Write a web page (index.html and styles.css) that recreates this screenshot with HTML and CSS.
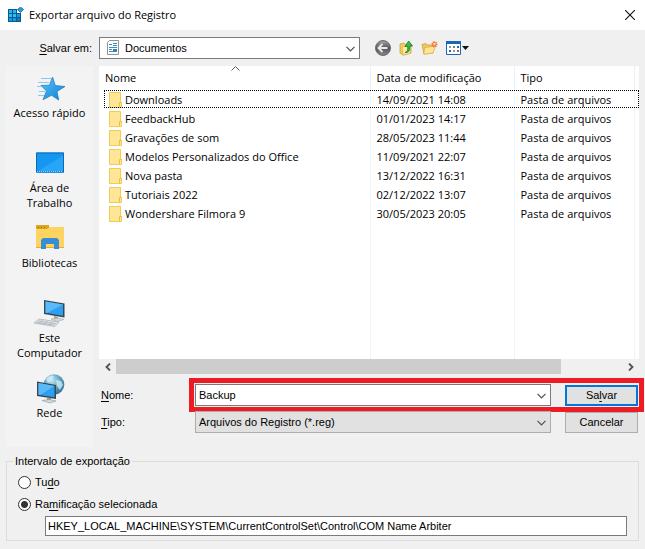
FILE: index.html
```html
<!DOCTYPE html>
<html lang="pt-BR">
<head>
  <meta charset="UTF-8" />
  <meta name="viewport" content="width=device-width, initial-scale=1.0"/>
  <title>Exportar arquivo do Registro</title>
  <link rel="stylesheet" href="styles.css">
</head>
<body>
  <svg class="simbolos" width="0" height="0" aria-hidden="true">
    <symbol id="seta" viewBox="0 0 9 6">
      <path d="M.5 .8 4.5 4.8 8.5 .8" fill="none" stroke="#505050" stroke-width="1.2"/>
    </symbol>
    <symbol id="pasta" viewBox="0 0 13 16">
      <path d="M.5 .5h11v10h1v5H.5z" fill="#ffe596" stroke="#f0cb55"/>
      <path d="M10.500 15v-4.500h2" fill="none" stroke="#e9bf3c"/>
    </symbol>
  </svg>

  <header class="titulo">
    <svg width="16" height="16" viewBox="0 0 16 16">
      <path d="M0 2h9v4h4v9H0z" fill="#075a94"/>
      <path d="M1 3h3v3H1zM5 3h3v3H5z" fill="#28b4ec"/>
      <path d="M1 7h3v3H1zM5 7h3v3H5z" fill="#35c0f2"/>
      <path d="M9 7h3v3H9zM1 11h3v3H1zM5 11h3v3H5z" fill="#1c98d8"/>
      <path d="M9 11h3v3H9z" fill="#0f7cc0"/>
      <path d="M12.500 0l3 2.500-3 3-3-3z" fill="#2b9fdc" stroke="#0a5f9c" stroke-width=".8"/>
    </svg>
    <h1>Exportar arquivo do Registro</h1>
    <button class="fechar" aria-label="Fechar">
      <svg width="10" height="10" viewBox="0 0 10 10"><path d="M0 0l10 10M10 0L0 10" stroke="#111" stroke-width="1.1"/></svg>
    </button>
  </header>

  <div class="barra">
    <label for="salvar-em"><u>S</u>alvar em:</label>
    <div class="combo combo-local">
      <svg class="combo-icone" width="12" height="15" viewBox="0 0 12 15">
        <path d="M.5 2.500 2.500.5h9v14H.5z" fill="#fdfdfd" stroke="#8c9499"/>
        <path d="M2 4.500h3M6 3.500h4M6 5.500h4M2 7.500h8M2 9.500h3M2 11.500h8" stroke="#3d8cc4"/>
        <path d="M6 9h4v2H6z" fill="#2f7db5"/>
      </svg>
      <select id="salvar-em"><option>Documentos</option></select>
      <svg class="combo-seta" width="9" height="6"><use href="#seta"/></svg>
    </div>
    <div class="ferramentas">
      <button aria-label="Voltar">
        <svg width="16" height="16" viewBox="0 0 16 16">
          <defs><linearGradient id="cinza" x2="0" y2="1"><stop stop-color="#a8a8a8"/><stop offset=".5" stop-color="#555"/><stop offset="1" stop-color="#8a8a8a"/></linearGradient></defs>
          <circle cx="8" cy="8" r="7.500" fill="url(#cinza)" stroke="#6b6b6b"/>
          <path d="M7.500 4L3.500 8l4 4M4 8h8.500" fill="none" stroke="#e8e8e8" stroke-width="2"/>
        </svg>
      </button>
      <button aria-label="Um nível acima">
        <svg width="14" height="16" viewBox="0 0 14 16">
          <path d="M1 4l4-1 1 1.500 6-.5v9l-8 2-3-2z" fill="#f2cf63" stroke="#cf9f30" stroke-width=".8"/>
          <path d="M3 7l9-2-1 8.500-7 1.500z" fill="#ffe9a0" stroke="#d9ae45" stroke-width=".7"/>
          <path d="M6 12.500c2.500-.5 3-2.500 2.800-6H6L9.700 1l3.800 5h-2.700c.3 4-1 7-4.800 6.500z" fill="#3bb84a" stroke="#137a24" stroke-width=".8"/>
        </svg>
      </button>
      <button aria-label="Criar nova pasta">
        <svg width="17" height="16" viewBox="0 0 17 16">
          <path d="M1 4.500l4-1 1.500 1.500H12v8l-9 1z" fill="#efc85a" stroke="#cf9f30" stroke-width=".8"/>
          <path d="M4 7.500l10.500-1.500L12 13l-9.500 1.200z" fill="#ffe596" stroke="#d9ae45" stroke-width=".7"/>
          <path d="M13.500 .5l.8 2 2-.8-.8 2 1.500 1-1.800.6.5 2-1.800-1-1.200 1.600-.5-2-2 .3 1.200-1.700-1.400-1.200 2-.2-.3-2 1.500 1z" fill="#f0703c"/>
          <circle cx="13.400" cy="4" r="1.300" fill="#ffd9b0"/>
        </svg>
      </button>
      <button class="exibir" aria-label="Menu Exibir">
        <svg width="24" height="14" viewBox="0 0 24 14">
          <path d="M.5 .5h14v13H.5z" fill="#fff" stroke="#1a66b8"/>
          <path d="M0 0h15v3H0z" fill="#1a66b8"/>
          <path d="M3 5h2v2H3zM7 9h2v2H7z" fill="#8c9cae"/>
          <path d="M7 5h2v2H7z" fill="#4f9e50"/>
          <path d="M11 5h2v2h-2zM3 9h2v2H3z" fill="#205fc0"/>
          <path d="M11 9h2v2h-2z" fill="#c8502c"/>
          <path d="M16 5h7l-3.500 4z" fill="#111"/>
        </svg>
      </button>
    </div>
  </div>

  <main class="corpo">
    <nav class="locais">
      <button>
        <svg width="32" height="32" viewBox="0 0 32 32">
          <defs><linearGradient id="azul" x2="1" y2="1"><stop stop-color="#5cc4f7"/><stop offset="1" stop-color="#0a80dd"/></linearGradient></defs>
          <path d="M18.500 5l2.800 8.500 9.700 1-8 5 1.700 8.500-7.200-4.700-8.500 4.400 3.500-8.700-5.500-5.500 8.500-.3z" fill="url(#azul)" stroke="#2b7fc0" stroke-width=".8"/>
          <path d="M7 6.500h10M4 10.500h11M3 14.500h5M5 19.500h6M4 23.500h6" stroke="#8cc8ec"/>
        </svg>
        Acesso rápido
      </button>
      <button>
        <svg width="32" height="32" viewBox="0 0 32 32">
          <path d="M2 5.500h28v20H2z" fill="#1597f0"/>
          <path d="M2 25.500L30 8v17.500z" fill="#27a5f7"/>
          <path d="M2.500 6h27v19h-27z" fill="none" stroke="#0b69b5"/>
          <path d="M3 24.500h26" stroke="#8fd0fa" stroke-dasharray="1 1"/>
        </svg>
        Área de Trabalho
      </button>
      <button>
        <svg width="32" height="32" viewBox="0 0 32 32">
          <path d="M2 3h12l1 2h15v21H2z" fill="#ffd35f"/>
          <path d="M2 3h13v3l-2 1H2z" fill="#dca51f"/>
          <path d="M4 5.500h8" stroke="#8a6514" stroke-dasharray="1 2"/>
          <path d="M2 25.500h28" stroke="#e3ad35"/>
          <path d="M7 27V18l2-2h14l2 2v9h-5v-5h-8v5z" fill="#368ed4"/>
        </svg>
        Bibliotecas
      </button>
      <button>
        <svg width="32" height="32" viewBox="0 0 32 32">
          <path d="M10 3l20.500 3.500v14L10 17z" fill="#36474f"/>
          <path d="M11.500 4.500L29 7.500v11.300l-17.500-3z" fill="#2d9ff0"/>
          <path d="M11.500 4.500L29 7.500 13 16l-1.500-.2z" fill="#5cb9f8"/>
          <path d="M20 19l4 .7v3h-4z" fill="#9ba4a8"/>
          <path d="M17 22l8-1 5 1.500-7 2z" fill="#d5dadd" stroke="#9aa1a5" stroke-width=".5"/>
          <path d="M5 22l20 3-4 4.500L0 26z" fill="#e2e5e7" stroke="#9aa1a5" stroke-width=".6"/>
          <path d="M4 24l18 2.800M2.500 25.500l18 2.600M9 22.800l-4 3.800M14 23.500l-4 4M19 24.300l-4 4" stroke="#a3abb0" stroke-width=".7"/>
        </svg>
        Este Computador
      </button>
      <button>
        <svg width="32" height="32" viewBox="0 0 32 32">
          <defs><radialGradient id="globo" cx=".4" cy=".3" r=".75"><stop stop-color="#c6e6f3"/><stop offset=".5" stop-color="#62a6c6"/><stop offset="1" stop-color="#2d6a8c"/></radialGradient></defs>
          <circle cx="20" cy="12.500" r="10.300" fill="url(#globo)"/>
          <path d="M12 7c3-4 6-4 8-3l-2 4-4 3zM22 8l5 1 2 4-3 5-3-4z" fill="#d9eef5" opacity=".75"/>
          <path d="M3 9.500l19 3.500v14L3 24z" fill="#36474f"/>
          <path d="M4.500 11l16 3v11.300l-16-2.600z" fill="#2d9ff0"/>
          <path d="M4.500 11l16 3L6 23l-1.500-.3z" fill="#5cb9f8"/>
          <path d="M13 25.500l4 .6v3h-4z" fill="#8f989d"/>
          <path d="M8 28.500l7-1 7 1.500-6 2z" fill="#d5dadd" stroke="#8f989d" stroke-width=".6"/>
        </svg>
        Rede
      </button>
    </nav>

    <section class="arquivos">
      <svg class="ordem" width="9" height="5" viewBox="0 0 9 5"><path d="M.5 4.500l4-4 4 4" fill="none" stroke="#606060"/></svg>
      <table>
        <colgroup><col><col class="col-data"><col class="col-tipo"><col class="col-resto"></colgroup>
        <thead>
          <tr><th>Nome</th><th>Data de modificação</th><th>Tipo</th><th></th></tr>
        </thead>
        <tbody>
          <tr class="foco"><td><svg width="13" height="16"><use href="#pasta"/></svg>Downloads</td><td>14/09/2021 14:08</td><td>Pasta de arquivos</td><td></td></tr>
          <tr><td><svg width="13" height="16"><use href="#pasta"/></svg>FeedbackHub</td><td>01/01/2023 14:17</td><td>Pasta de arquivos</td><td></td></tr>
          <tr><td><svg width="13" height="16"><use href="#pasta"/></svg>Gravações de som</td><td>28/05/2023 11:44</td><td>Pasta de arquivos</td><td></td></tr>
          <tr><td><svg width="13" height="16"><use href="#pasta"/></svg>Modelos Personalizados do Office</td><td>11/09/2021 22:07</td><td>Pasta de arquivos</td><td></td></tr>
          <tr><td><svg width="13" height="16"><use href="#pasta"/></svg>Nova pasta</td><td>13/12/2022 16:31</td><td>Pasta de arquivos</td><td></td></tr>
          <tr><td><svg width="13" height="16"><use href="#pasta"/></svg>Tutoriais 2022</td><td>02/12/2022 13:07</td><td>Pasta de arquivos</td><td></td></tr>
          <tr><td><svg width="13" height="16"><use href="#pasta"/></svg>Wondershare Filmora 9</td><td>30/05/2023 20:05</td><td>Pasta de arquivos</td><td></td></tr>
          <tr class="vazio"><td></td><td></td><td></td><td></td></tr>
        </tbody>
      </table>
      <div class="rolagem">
        <button aria-label="Rolar para a esquerda"><svg width="6" height="8" viewBox="0 0 6 8"><path d="M5 .5L1.500 4 5 7.500" fill="none" stroke="#505050" stroke-width="1.800"/></svg></button>
        <div class="trilho"><div class="polegar"></div></div>
        <button aria-label="Rolar para a direita"><svg width="6" height="8" viewBox="0 0 6 8"><path d="M1 .5L4.500 4 1 7.500" fill="none" stroke="#505050" stroke-width="1.800"/></svg></button>
      </div>

      <div class="linha">
        <label for="nome"><u>N</u>ome:</label>
        <div class="linha-campos destaque">
          <div class="combo">
            <input type="text" id="nome" value="Backup">
            <svg class="combo-seta" width="9" height="6"><use href="#seta"/></svg>
          </div>
          <button class="botao padrao">Sa<u>l</u>var</button>
        </div>
      </div>
      <div class="linha">
        <label for="tipo"><u>T</u>ipo:</label>
        <div class="linha-campos">
          <div class="combo combo-tipo">
            <select id="tipo"><option>Arquivos do Registro (*.reg)</option></select>
            <svg class="combo-seta" width="9" height="6"><use href="#seta"/></svg>
          </div>
          <button class="botao">Cancelar</button>
        </div>
      </div>
    </section>
  </main>

  <fieldset class="intervalo">
    <legend>Intervalo de exportação</legend>
    <label class="opcao"><input type="radio" name="intervalo"><span>Tu<u>d</u>o</span></label>
    <label class="opcao"><input type="radio" name="intervalo" checked><span>Ra<u>m</u>ificação selecionada</span></label>
    <input type="text" class="ramo" aria-label="Ramificação" value="HKEY_LOCAL_MACHINE\SYSTEM\CurrentControlSet\Control\COM Name Arbiter">
  </fieldset>
</body>
</html>
```

FILE: styles.css
```css
* {
  margin: 0; padding: 0; box-sizing: border-box;
}
body {
  background: #f0f0f0;
  color: #000;
  font: 11px/15px "Liberation Sans", Arial, sans-serif;
}
button, input, select {
  font: inherit;
  color: inherit;
}
button {
  border: none;
  background: transparent;
}
svg {
  display: block;
  flex: none;
}
u {
  text-underline-offset: 2px;
}
.simbolos {
  position: absolute;
}

/* barra de título */
.titulo {
  display: flex;
  align-items: center;
  gap: 5px;
  height: 30px;
  padding: 0 10px 0 8px;
  background: #fff;
}
.titulo h1 {
  flex: 1;
  font: 11px/16px "Open Sans", "Noto Sans", sans-serif;
}

/* salvar em */
.barra {
  display: flex;
  align-items: center;
  height: 36px;
}
.barra > label {
  width: 92px;
  margin-right: 7px;
  text-align: right;
}
.combo {
  position: relative;
  flex: 1;
}
.combo input, .combo select {
  display: block;
  appearance: none;
  width: 100%;
  height: 22px;
  padding: 0 20px 0 3px;
  border: 1px solid #7a7a7a;
  border-radius: 0;
  background: #fff;
}
.combo-seta {
  position: absolute;
  right: 5px;
  top: 9px;
  pointer-events: none;
}
.combo-icone {
  position: absolute;
  left: 8px;
  top: 3px;
  pointer-events: none;
}
.combo-local {
  flex: 0 1 261px;
}
.combo .combo-icone + select {
  padding-left: 25px;
}
.combo-tipo select {
  background: #e1e1e1;
  border-color: #adadad;
}
.ferramentas {
  display: flex;
  align-items: center;
  gap: 8px;
  margin-left: 15px;
}

/* corpo */
.corpo {
  display: flex;
  gap: 6px;
  padding: 0 6px;
}
.locais {
  display: flex;
  flex-direction: column;
  width: 87px;
  padding-top: 6px;
  background: #f3f3f3;
}
.locais button {
  display: flex;
  flex-direction: column;
  align-items: center;
  gap: 1px;
  height: 75px;
  padding: 0 3px;
  font: 11px/15px "Open Sans", "Noto Sans", sans-serif;
}
.arquivos {
  position: relative;
  flex: 1;
}
.ordem {
  position: absolute;
  left: 132px;
  top: 0;
}
table {
  width: 100%;
  height: 293px;
  table-layout: fixed;
  border-collapse: collapse;
  background: #fff;
  font: 11px/16px "Open Sans", "Noto Sans", sans-serif;
}
.col-data { width: 144px; }
.col-tipo { width: 120px; }
.col-resto { width: 5px; }
th {
  height: 24px;
  padding: 0 6px;
  border-right: 1px solid #e5f1fb;
  font-weight: normal;
  text-align: left;
}
td {
  height: 19px;
  padding: 0 6px;
  border-right: 1px solid #eef6fd;
  white-space: nowrap;
}
td:first-child {
  padding-left: 10px;
}
th:last-child, td:last-child {
  padding: 0;
  border: none;
}
td svg {
  display: inline-block;
  margin-right: 3px;
  vertical-align: top;
}
.foco {
  position: relative;
}
.foco td:first-child::after {
  content: "";
  position: absolute;
  inset: 0 0 1px 5px;
  border: 1px dotted #000;
}
.vazio td {
  height: auto;
}
.rolagem {
  display: flex;
  height: 15px;
  margin-bottom: 10px;
}
.rolagem button {
  display: flex;
  align-items: center;
  justify-content: center;
  width: 17px;
}
.trilho {
  flex: 1;
}
.polegar {
  width: 88%;
  height: 100%;
  background: #cdcdcd;
}

/* nome e tipo */
.linha {
  display: flex;
  align-items: center;
  padding: 0 1px 0 2px;
  margin-bottom: 5px;
}
.linha > label {
  width: 94px;
}
.linha-campos {
  position: relative;
  display: flex;
  align-items: center;
  flex: 1;
  gap: 14px;
}
.destaque::after {
  content: "";
  position: absolute;
  inset: -6px;
  border: 5px solid #ed1c24;
  pointer-events: none;
}
.botao {
  width: 73px;
  height: 21px;
  border: 1px solid #adadad;
  background: #e1e1e1;
}
.padrao {
  border: 2px solid #0078d7;
}

/* intervalo de exportação */
.intervalo {
  margin: 7px 6px 8px;
  padding: 6px 11px 4px;
  border: 1px solid #dcdcdc;
}
.intervalo legend {
  margin-left: -5px;
  padding: 0 2px;
}
.opcao {
  display: flex;
  align-items: center;
  gap: 4px;
  margin-bottom: 7px;
}
.opcao input {
  appearance: none;
  width: 13px;
  height: 13px;
  border: 1px solid #333;
  border-radius: 50%;
  background: #fff;
}
.opcao input:checked {
  background: radial-gradient(circle, #333 3px, #fff 4px);
}
.ramo {
  display: block;
  width: calc(100% - 27px);
  height: 20px;
  margin: -3px 0 0 27px;
  padding: 0 2px;
  border: 1px solid #7a7a7a;
  background: #fff;
}
```
